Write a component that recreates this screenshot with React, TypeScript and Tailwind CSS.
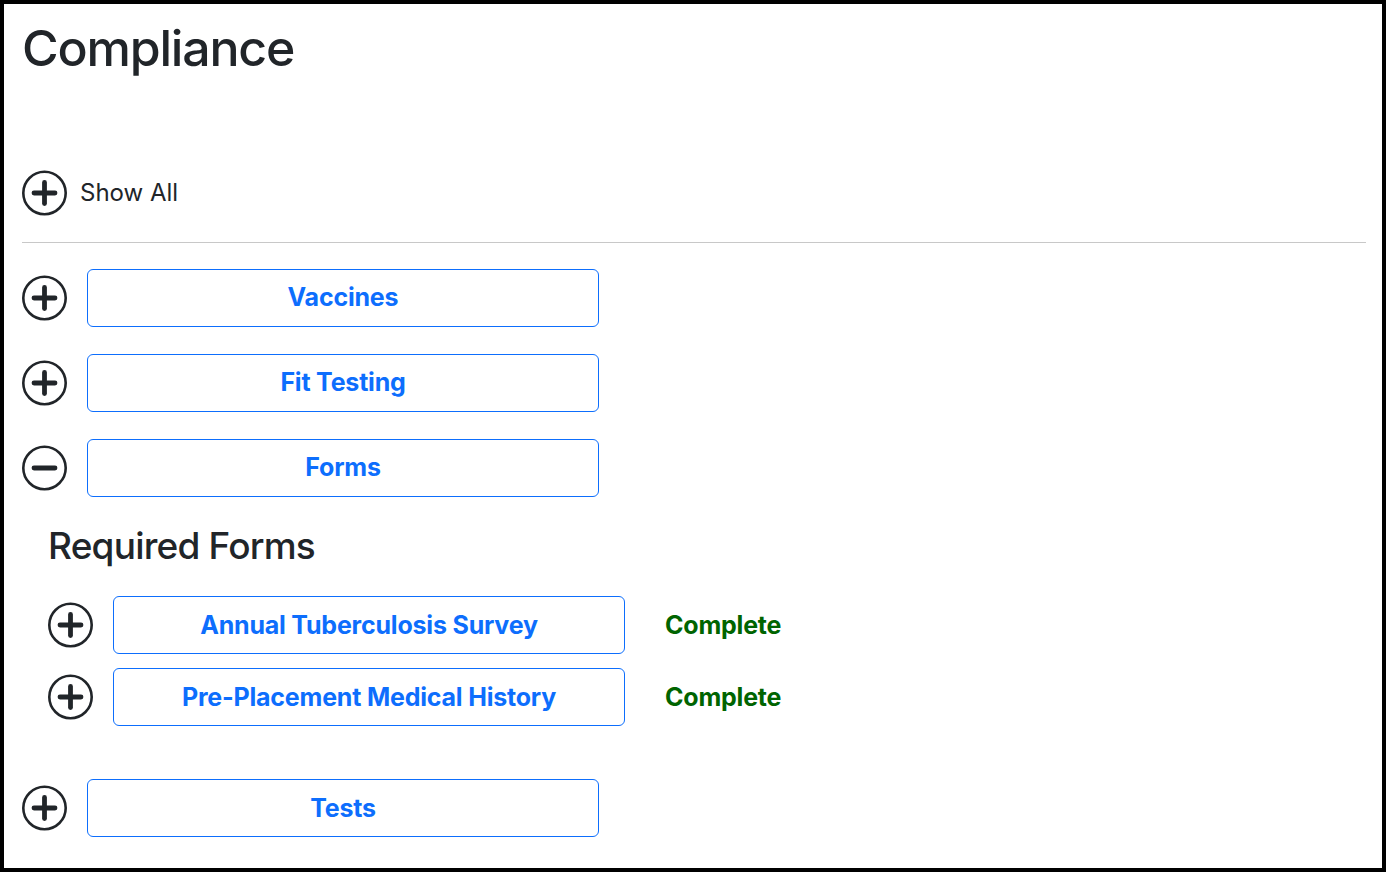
import type { ReactNode } from 'react'

// Circle toggle icon, drawn to match the thick plus / minus of the reference.
function Toggle({ open = false }: { open?: boolean }) {
  return (
    <svg width="45" height="46" viewBox="0 0 45 46" className="shrink-0 text-[#212529]">
      <circle cx="22.5" cy="23" r="21.2" fill="none" stroke="currentColor" strokeWidth="2.6" />
      <line x1="12" y1="23" x2="33" y2="23" stroke="currentColor" strokeWidth="4.8" strokeLinecap="round" />
      {!open && <line x1="22.5" y1="12.5" x2="22.5" y2="33.5" stroke="currentColor" strokeWidth="4.8" strokeLinecap="round" />}
    </svg>
  )
}

function Row({ label, open, children }: { label: string; open?: boolean; children?: ReactNode }) {
  return (
    <div className="flex items-center gap-5">
      <Toggle open={open} />
      <button className="h-[58px] w-[512px] rounded-[6px] border border-[#0d6efd] bg-white text-[25px] font-bold tracking-[-0.2px] text-[#0d6efd]">
        {label}
      </button>
      {children}
    </div>
  )
}

const forms = ['Annual Tuberculosis Survey', 'Pre-Placement Medical History']

export default function App() {
  return (
    <div
      className="box-border h-[872px] w-[1386px] overflow-hidden border-4 border-black bg-white pl-[18px] pr-[16px] text-[#212529]"
      style={{ fontFamily: 'Inter, "Liberation Sans", sans-serif' }}
    >
      <h1 className="mt-[14px] text-[50px] font-medium leading-[1.2] tracking-[-1.2px]">Compliance</h1>

      <div className="mt-[92px] flex items-center gap-[13px]">
        <Toggle />
        <span className="text-[24px]">Show All</span>
      </div>

      <hr className="mt-[26px] border-t border-[#c8c8c8]" />

      <div className="mt-[26px] flex flex-col gap-[27px]">
        <Row label="Vaccines" />
        <Row label="Fit Testing" />
        <Row label="Forms" open />
      </div>

      <div className="pl-[26px]">
        <h2 className="mt-[27px] text-[37px] font-medium leading-[1.2] tracking-[-0.8px]">Required Forms</h2>
        <div className="mt-[28px] flex flex-col gap-[14px]">
          {forms.map((f) => (
            <Row key={f} label={f}>
              <span className="ml-5 text-[25px] font-bold tracking-[-0.2px] text-[#006400]">Complete</span>
            </Row>
          ))}
        </div>
      </div>

      <div className="mt-[53px]">
        <Row label="Tests" />
      </div>
    </div>
  )
}
